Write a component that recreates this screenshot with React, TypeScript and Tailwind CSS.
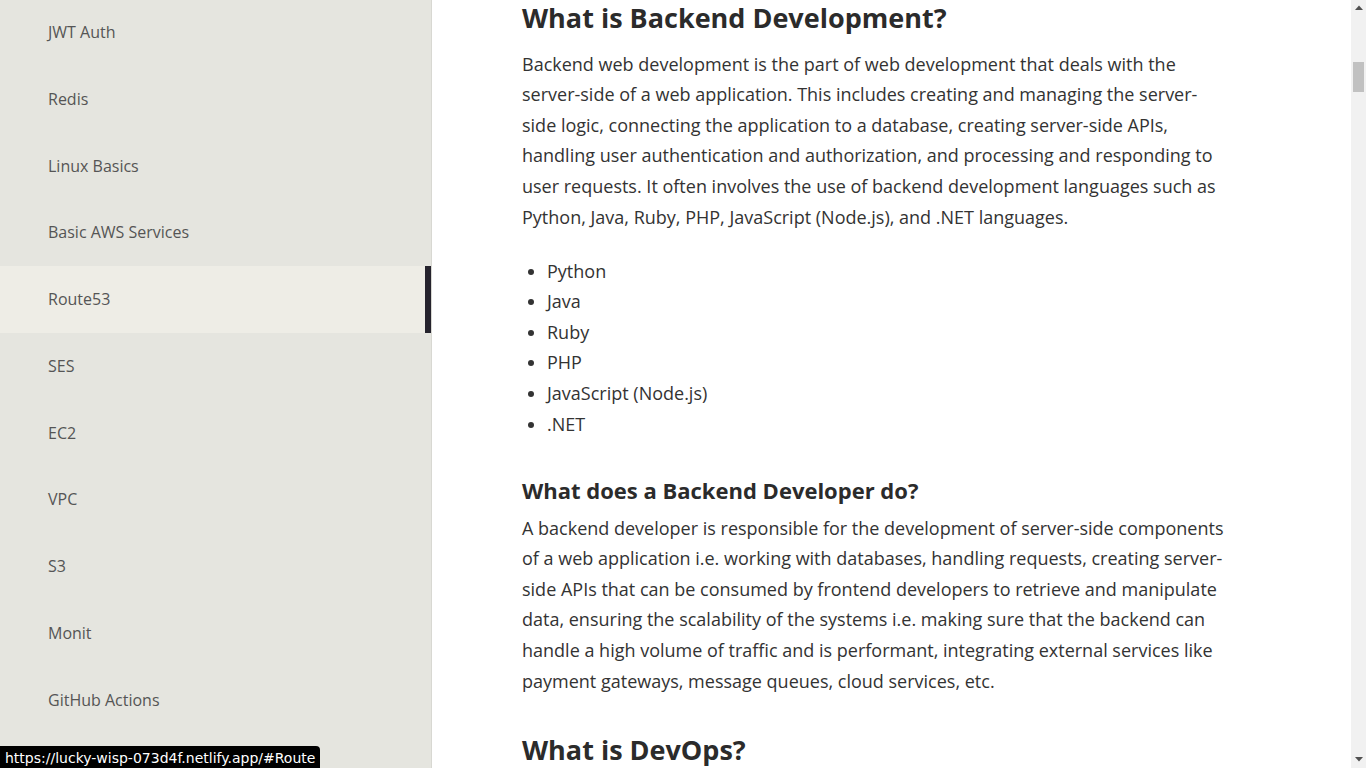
import React from 'react';

const TOPICS = [
  'JWT Auth',
  'Redis',
  'Linux Basics',
  'Basic AWS Services',
  'Route53',
  'SES',
  'EC2',
  'VPC',
  'S3',
  'Monit',
  'GitHub Actions',
];

const LANGS = ['Python', 'Java', 'Ruby', 'PHP', 'JavaScript (Node.js)', '.NET'];

function Sidebar({ active }: { active: string }) {
  return (
    <aside className="w-[432px] shrink-0 h-screen overflow-hidden bg-[#e5e5df] border-r border-[#d8d8d2]">
      <ul className="-mt-[1.4px]">
        {TOPICS.map((t) => (
          <li key={t}>
            <a
              href={`#${t.replace(/\s+/g, '')}`}
              className={
                t === active
                  ? 'block pl-12 py-[21.4px] leading-6 text-[16px] text-[#555] bg-[#eeede6] border-r-[6px] border-[#25232d]'
                  : 'block pl-12 py-[21.4px] leading-6 text-[16px] text-[#555]'
              }
            >
              {t}
            </a>
          </li>
        ))}
      </ul>
    </aside>
  );
}

// page scrollbar, as drawn by the browser in the screenshot
function Scrollbar() {
  return (
    <div className="w-[15px] shrink-0 h-screen bg-[#f1f1f1] flex flex-col items-center">
      <svg width="8" height="5" viewBox="0 0 8 5" className="mt-[5px]">
        <path d="M0 5 L4 0.5 L8 5 Z" fill="#505050" />
      </svg>
      <div className="mt-[52px] w-[11px] h-[30px] bg-[#c1c1c1]" />
      <div className="flex-1" />
      <svg width="8" height="5" viewBox="0 0 8 5" className="mb-[6px]">
        <path d="M0 0 L8 0 L4 4.5 Z" fill="#505050" />
      </svg>
    </div>
  );
}

export default function App() {
  return (
    <div className="relative flex h-screen overflow-hidden bg-white font-['Open_Sans',sans-serif] text-[#333]">
      <Sidebar active="Route53" />

      <main className="flex-1 h-screen overflow-hidden">
        <article className="pl-[90px] w-[794px] text-[18px] leading-[1.7]">
          <h2 className="text-[27px] leading-[36px] font-bold text-[#2b2b2b] mb-[12.7px]">
            What is Backend Development?
          </h2>
          <p>
            Backend web development is the part of web development that deals with the server-side of a web
            application. This includes creating and managing the server-side logic, connecting the application to a
            database, creating server-side APIs, handling user authentication and authorization, and processing and
            responding to user requests. It often involves the use of backend development languages such as Python,
            Java, Ruby, PHP, JavaScript (Node.js), and .NET languages.
          </p>
          <ul className="list-disc pl-[25px] mt-[23.4px]">
            {LANGS.map((l) => (
              <li key={l}>{l}</li>
            ))}
          </ul>

          <h3 className="text-[22px] leading-[30px] font-bold text-[#2b2b2b] mt-[35.7px] mb-[7.7px]">
            What does a Backend Developer do?
          </h3>
          <p>
            A backend developer is responsible for the development of server-side components of a web application
            i.e. working with databases, handling requests, creating server-side APIs that can be consumed by frontend
            developers to retrieve and manipulate data, ensuring the scalability of the systems i.e. making sure that
            the backend can handle a high volume of traffic and is performant, integrating external services like
            payment gateways, message queues, cloud services, etc.
          </p>

          <h2 className="text-[27px] leading-[36px] font-bold text-[#2b2b2b] mt-[35.7px] mb-[12.7px]">
            What is DevOps?
          </h2>
          <p>
            DevOps is a set of practices that combines software development and IT operations. It aims to shorten the
            development life cycle and provide continuous delivery with high software quality, using automation,
            monitoring and close collaboration between developers and operations teams.
          </p>
        </article>
      </main>

      <Scrollbar />

      <div className="absolute left-0 bottom-0 bg-black text-white rounded-tr-[4px] px-[5px] pt-[2px] h-[22px] text-[14px] leading-[20px] font-['DejaVu_Sans',sans-serif]">
        https://lucky-wisp-073d4f.netlify.app/#Route
      </div>
    </div>
  );
}
